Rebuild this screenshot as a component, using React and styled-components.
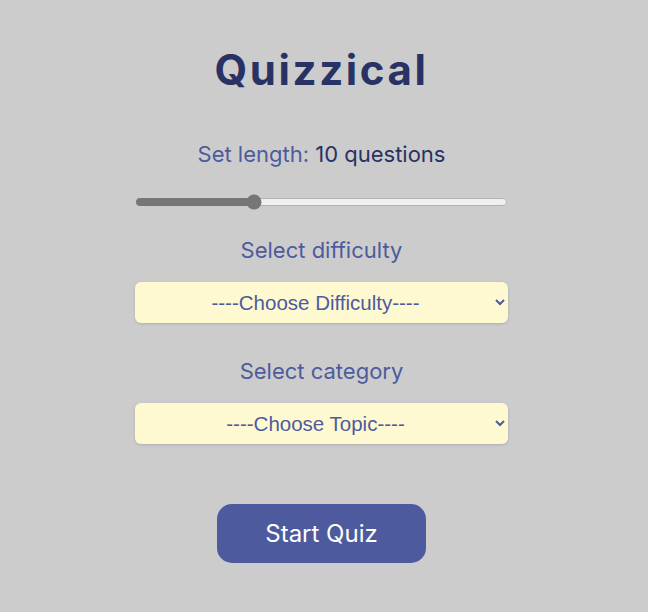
import React, { useState } from "react";
import styled, { createGlobalStyle } from "styled-components";

const Global = createGlobalStyle`
  html, body { margin: 0; padding: 0; background: #cccccc; }
  body { font-family: Inter, "Noto Sans", sans-serif; }
`;

const Page = styled.main`
  width: 648px;
  min-height: 612px;
  box-sizing: border-box;
  padding-top: 41px;
  display: flex;
  flex-direction: column;
  align-items: center;
  padding-right: 5px;
`;

const Title = styled.h1`
  margin: 0;
  font-family: Inter, sans-serif;
  font-weight: 700;
  font-size: 42px;
  line-height: 58px;
  letter-spacing: 2.6px;
  color: #293264;
`;

const LengthText = styled.p`
  margin: 40px 0 0;
  font-size: 22px;
  line-height: 30px;
  color: #4d5b9e;
`;

const Strong = styled.span`
  color: #293264;
`;

const Range = styled.input`
  width: 373px;
  margin: 25px 0 0;
  accent-color: #767676;
`;

const Label = styled.label`
  margin-top: ${(p) => p.$top}px;
  font-size: 22px;
  line-height: 30px;
  color: #4d5b9e;
`;

const Select = styled.select`
  margin-top: 17px;
  width: 373px;
  height: 41px;
  border: none;
  border-radius: 6px;
  background: #fff9d2;
  color: #4d5b9e;
  font-family: "Liberation Sans", Arial, sans-serif;
  font-size: 20.5px;
  text-align: center;
  text-align-last: center;
  box-shadow: 0 1px 3px rgba(0, 0, 0, 0.15);
  outline: none;
`;

const Button = styled.button`
  margin-top: 60px;
  width: 209px;
  height: 59px;
  border: none;
  border-radius: 15px;
  background: #4d5b9e;
  color: #ffffff;
  font-family: Inter, sans-serif;
  font-size: 24px;
  cursor: pointer;
`;

export default function App() {
  const [len, setLen] = useState(10);
  return (
    <>
      <Global />
      <Page>
        <Title>Quizzical</Title>
        <LengthText>
          Set length: <Strong>{len} questions</Strong>
        </LengthText>
        <Range
          type="range"
          min={1}
          max={30}
          value={len}
          onChange={(e) => setLen(Number(e.target.value))}
        />
        <Label $top={25}>Select difficulty</Label>
        <Select defaultValue="">
          <option value="">----Choose Difficulty----</option>
          <option value="easy">Easy</option>
          <option value="medium">Medium</option>
          <option value="hard">Hard</option>
        </Select>
        <Label $top={33}>Select category</Label>
        <Select defaultValue="">
          <option value="">----Choose Topic----</option>
          <option value="9">General Knowledge</option>
        </Select>
        <Button>Start Quiz</Button>
      </Page>
    </>
  );
}
